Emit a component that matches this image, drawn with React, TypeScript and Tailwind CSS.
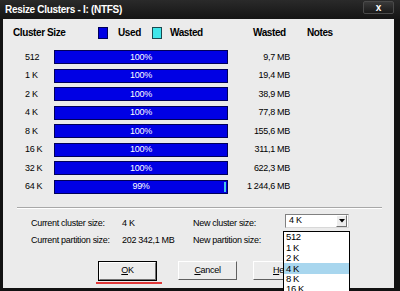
import React from "react";

const rows = [
  { size: "512", pct: "100%", wasted: "9,7 MB", partial: false },
  { size: "1 K", pct: "100%", wasted: "19,4 MB", partial: false },
  { size: "2 K", pct: "100%", wasted: "38,9 MB", partial: false },
  { size: "4 K", pct: "100%", wasted: "77,8 MB", partial: false },
  { size: "8 K", pct: "100%", wasted: "155,6 MB", partial: false },
  { size: "16 K", pct: "100%", wasted: "311,1 MB", partial: false },
  { size: "32 K", pct: "100%", wasted: "622,3 MB", partial: false },
  { size: "64 K", pct: "99%", wasted: "1 244,6 MB", partial: true },
];

const items = ["512", "1 K", "2 K", "4 K", "8 K", "16 K"];

export default function App() {
  return (
    <div
      className="relative w-[400px] h-[291px] overflow-hidden bg-[#121212] flex flex-col text-black"
      style={{ fontFamily: '"Liberation Sans", Arial, sans-serif' }}
    >
      {/* Title bar */}
      <div className="h-[19px] flex items-center bg-gradient-to-b from-[#2a2a2a] to-[#151515] pl-[5px] pr-[6px]">
        <span className="text-white font-bold text-[10px] tracking-[-0.3px] leading-none">
          Resize Clusters - I: (NTFS)
        </span>
        <div className="ml-auto self-start mt-[1px] w-[31px] h-[13px] rounded-[2px] border border-[#4a4a4a] bg-gradient-to-b from-[#3a3a3a] to-[#1a1a1a] flex items-center justify-center">
          <span className="text-white font-bold text-[10px] leading-none">x</span>
        </div>
      </div>

      {/* Body */}
      <div className="flex-1 ml-[3px] mr-[6px] mb-[3px] bg-[#ebebeb] flex flex-col">
        {/* Header */}
        <div className="mt-[8px] h-[12px] flex items-center pl-[10px] font-bold text-[10px] tracking-[-0.4px] leading-none">
          <span className="w-[85px]">Cluster Size</span>
          <span className="w-[10px] h-[12px] bg-[#0000e4] border border-[#00005a]" />
          <span className="ml-[10px] w-[34px]">Used</span>
          <span className="w-[10px] h-[12px] bg-[#3fe6ea] border border-[#1a4a50]" />
          <span className="ml-[8px] w-[83px]">Wasted</span>
          <span className="w-[54px]">Wasted</span>
          <span>Notes</span>
        </div>

        {/* Rows */}
        <div className="mt-[11px] flex flex-col gap-[4.5px]">
          {rows.map((r) => (
            <div key={r.size} className="h-[14px] flex items-center pl-[22px] text-[9px] tracking-[-0.3px] leading-none">
              <span className="w-[29px]">{r.size}</span>
              <div className="relative w-[174px] h-[14px] bg-[#0000e4] border border-[#00005a] flex items-center justify-center">
                <span className="text-white text-[9px] tracking-[-0.3px]">{r.pct}</span>
                {r.partial && (
                  <span className="absolute right-[1px] top-[1px] bottom-[1px] w-[2px] bg-[#48c8e8]" />
                )}
              </div>
              <span className="w-[62px] text-right">{r.wasted}</span>
            </div>
          ))}
        </div>

        {/* Separator */}
        <div className="mt-[13px] ml-[14px] w-[365px] border-t border-[#a8a8a8] border-b border-b-white" />

        {/* Info */}
        <div className="mt-[6px] flex flex-col text-[9px] tracking-[-0.3px] leading-none">
          <div className="h-[17px] flex items-center pl-[28px]">
            <span className="w-[91px]">Current cluster size:</span>
            <span className="w-[71px]">4 K</span>
            <span className="w-[92px]">New cluster size:</span>
            <div className="self-start -mt-[1px] w-[64px] h-[14px] bg-white border border-t-[#808080] border-l-[#808080] border-r-[#d8d8d8] border-b-[#d8d8d8] flex items-center">
              <span className="pl-[3px] flex-1">4 K</span>
              <div className="w-[11px] h-[12px] mr-[1px] bg-[#ececec] border border-t-white border-l-white border-r-[#707070] border-b-[#707070] flex items-center justify-center">
                <svg width="6" height="4" viewBox="0 0 6 4">
                  <path d="M0 0 H6 L3 3.5 Z" fill="#000" />
                </svg>
              </div>
            </div>
          </div>
          <div className="h-[17px] flex items-center pl-[28px]">
            <span className="w-[91px]">Current partition size:</span>
            <span className="w-[71px]">202 342,1 MB</span>
            <span className="w-[92px]">New partition size:</span>
          </div>
        </div>

        {/* Buttons */}
        <div className="mt-[12px] flex items-start pl-[95px] text-[9px] tracking-[-0.3px] leading-none">
          <div className="flex flex-col">
            <div className="w-[59px] h-[20px] border border-black">
              <div className="w-full h-full bg-[#ececec] border border-t-white border-l-white border-r-[#707070] border-b-[#707070] flex items-center justify-center">
                <span><span className="underline">O</span>K</span>
              </div>
            </div>
            <div className="mt-[1px] -ml-[2px] w-[66px] h-[2px] bg-[#e03838]" />
          </div>
          <div className="ml-[16px] w-[59px] h-[19px] bg-[#ececec] border border-t-white border-l-white border-r-[#606060] border-b-[#606060] flex items-center justify-center">
            <span><span className="underline">C</span>ancel</span>
          </div>
          <div className="ml-[16px] w-[59px] h-[19px] bg-[#ececec] border border-t-white border-l-white border-r-[#606060] border-b-[#606060] flex items-center pl-[19px]">
            <span><span className="underline">H</span>elp</span>
          </div>
        </div>
      </div>

      {/* Dropdown list overlay */}
      <div className="absolute left-[283px] top-[231px] w-[67px] h-[70px] bg-white border border-black text-[9.5px] tracking-[-0.4px] leading-none">
        {items.map((it) => (
          <div
            key={it}
            className={
              "h-[10.4px] flex items-center pl-[2px] " + (it === "4 K" ? "bg-[#a8d6ee]" : "")
            }
          >
            {it}
          </div>
        ))}
      </div>
    </div>
  );
}
